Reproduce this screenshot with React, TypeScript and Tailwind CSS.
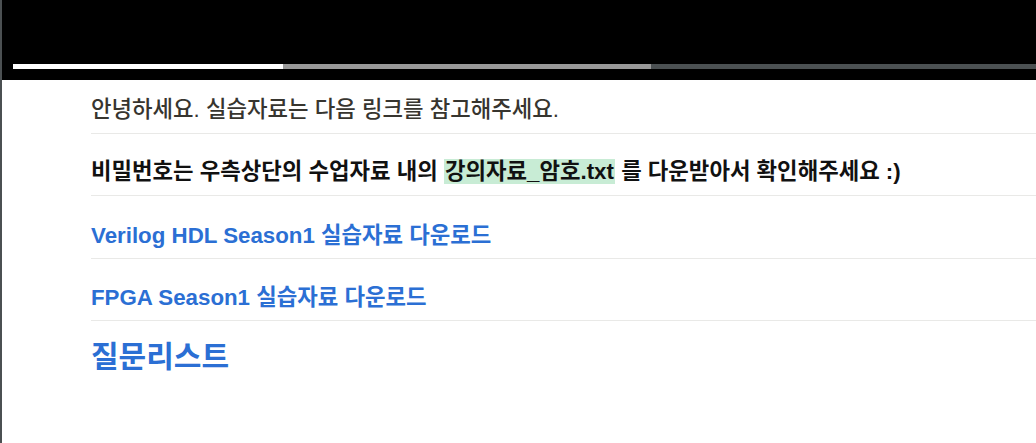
import React from "react";

export default function App() {
  const font = { fontFamily: '"Liberation Sans", "Noto Sans CJK KR", sans-serif' };
  return (
    <div className="w-[1036px] h-[443px] overflow-hidden bg-white flex" style={font}>
      <div className="w-[2px] h-full bg-[#4b5052] shrink-0" />
      <div className="flex-1 flex flex-col">
        <div className="h-[80px] bg-black flex flex-col pt-[64px] pl-[11px]">
          <div className="h-[5px] flex">
            <div className="w-[270px] bg-white" />
            <div className="w-[368px] bg-[#999999]" />
            <div className="flex-1 bg-[#4b5052]" />
          </div>
        </div>
        <div className="pl-[89px] flex flex-col">
          <div className="pt-[16px] pb-[9px] border-b border-[#e9e9e7] text-[22.3px] leading-[28px] font-medium text-[#37352f] whitespace-nowrap">
            안녕하세요. 실습자료는 다음 링크를 참고해주세요.
          </div>
          <div className="pt-[24px] pb-[9px] border-b border-[#e9e9e7] text-[22.3px] leading-[28px] font-semibold text-[#111111] whitespace-nowrap">
            비밀번호는 우측상단의 수업자료 내의{" "}
            <span className="bg-[#c8ecd5] px-[1px]">강의자료_암호.txt</span> 를 다운받아서 확인해주세요 :)
          </div>
          <div className="pt-[26px] pb-[8px] border-b border-[#e9e9e7] text-[22.3px] leading-[28px] font-semibold text-[#2b6fd4] whitespace-nowrap">
            Verilog HDL Season1 실습자료 다운로드
          </div>
          <div className="pt-[25px] pb-[8px] border-b border-[#e9e9e7] text-[22.3px] leading-[28px] font-semibold text-[#2b6fd4] whitespace-nowrap">
            FPGA Season1 실습자료 다운로드
          </div>
          <div className="pt-[18px] text-[30px] leading-[36px] font-semibold text-[#2b6fd4]">
            질문리스트
          </div>
        </div>
      </div>
    </div>
  );
}
